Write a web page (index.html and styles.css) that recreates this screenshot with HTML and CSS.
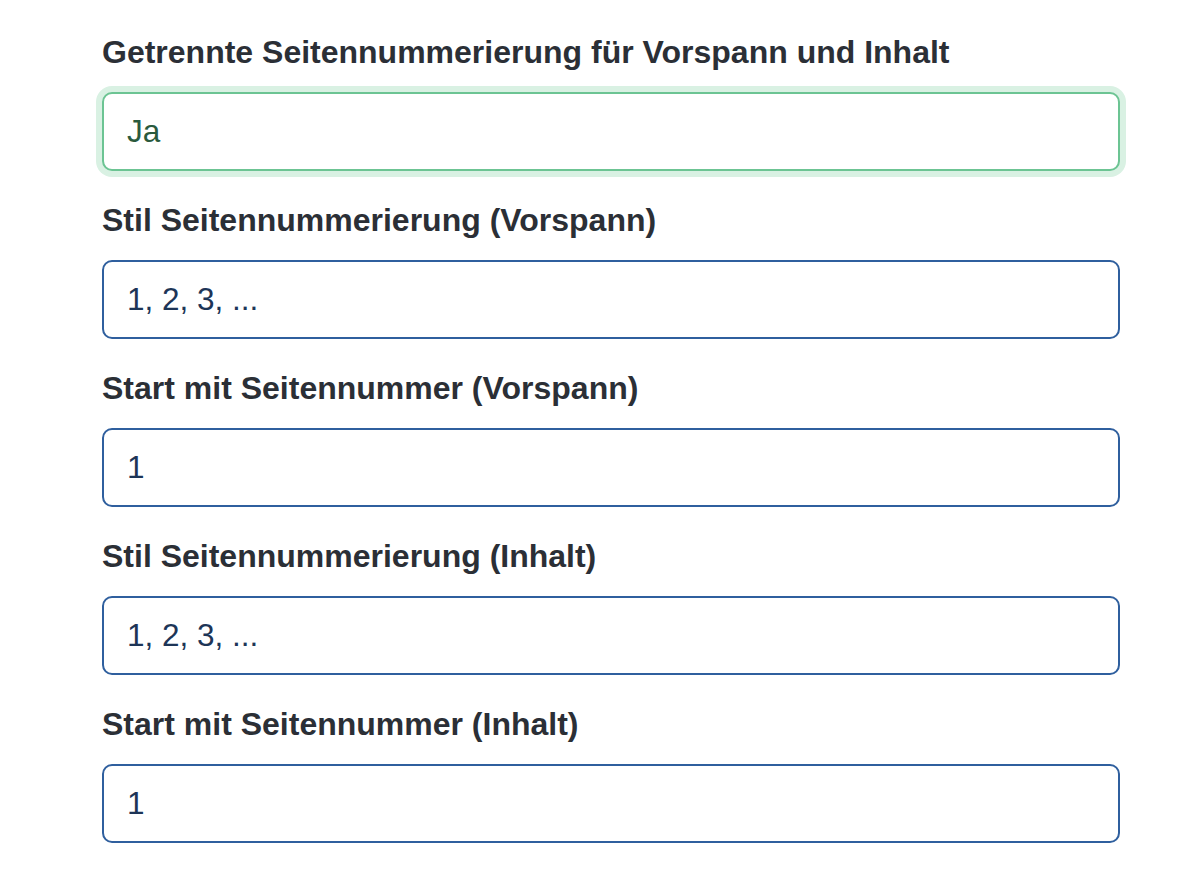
FILE: index.html
```html
<!DOCTYPE html>
<html lang="de">
<head>
    <meta charset="UTF-8">
    <meta name="viewport" content="width=device-width, initial-scale=1.0">
    <title>Seitennummerierung</title>
    <link rel="stylesheet" href="styles.css">
</head>
<body>

    <form class="settings-form">
        <div class="form-group">
            <label for="getrennt">Getrennte Seitennummerierung für Vorspann und Inhalt</label>
            <div class="form-control is-valid" id="getrennt">Ja</div>
        </div>

        <div class="form-group">
            <label for="stilVorspann">Stil Seitennummerierung (Vorspann)</label>
            <div class="form-control" id="stilVorspann">1, 2, 3, ...</div>
        </div>

        <div class="form-group">
            <label for="startVorspann">Start mit Seitennummer (Vorspann)</label>
            <div class="form-control" id="startVorspann">1</div>
        </div>

        <div class="form-group">
            <label for="stilInhalt">Stil Seitennummerierung (Inhalt)</label>
            <div class="form-control" id="stilInhalt">1, 2, 3, ...</div>
        </div>

        <div class="form-group">
            <label for="startInhalt">Start mit Seitennummer (Inhalt)</label>
            <div class="form-control" id="startInhalt">1</div>
        </div>
    </form>

</body>
</html>
```

FILE: styles.css
```css
body {
    font-family: "Liberation Sans", Arial, sans-serif;
    background-color: #fff;
    margin: 0;
    padding: 0;
}

.settings-form {
    width: 1018px;
    margin-left: 102px;
    padding-top: 33px;
}

.form-group {
    display: flex;
    flex-direction: column;
    margin-bottom: 30px;
}

.form-group label {
    font-size: 32px;
    font-weight: bold;
    color: #2b2f36;
    line-height: 38px;
    margin-bottom: 21px;
}

.form-control {
    box-sizing: border-box;
    height: 79px;
    padding: 0 23px;
    display: flex;
    align-items: center;
    font-size: 31.5px;
    color: #1d3557;
    border: 2px solid #2f5f9e;
    border-radius: 10px;
    background-color: #fff;
}

.form-control.is-valid {
    color: #2a5a3d;
    border-color: #6cc493;
    box-shadow: 0 0 0 6px #d9f1e3;
}
```
